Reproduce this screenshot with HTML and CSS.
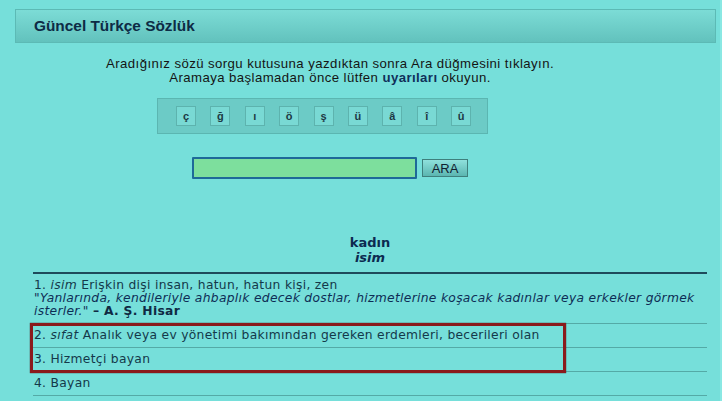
FILE: index.html
```html
<!DOCTYPE html>
<html lang="tr">
<head>
<meta charset="utf-8">
<title>Güncel Türkçe Sözlük</title>
<link rel="stylesheet" href="styles.css">
</head>
<body>
<div class="page">
  <div class="header"><h1 class="title">Güncel Türkçe Sözlük</h1></div>
  <div class="search">
    <p class="intro">Aradığınız sözü sorgu kutusuna yazdıktan sonra Ara düğmesini tıklayın.<br>Aramaya başlamadan önce lütfen <b class="warn">uyarıları</b> okuyun.</p>
    <div class="chars">
      <span class="ch">ç</span><span class="ch">ğ</span><span class="ch">ı</span><span class="ch">ö</span><span class="ch">ş</span><span class="ch">ü</span><span class="ch">â</span><span class="ch">î</span><span class="ch">û</span>
    </div>
    <div class="form">
      <input class="query" type="text" value="">
      <button class="go" type="button">ARA</button>
    </div>
  </div>
  <div class="results">
    <div class="head">
      <div class="word">kadın</div>
      <div class="kind">isim</div>
    </div>
    <div class="list">
      <div class="row r1">1. <i>isim</i> Erişkin dişi insan, hatun, hatun kişi, zen<br><i class="quote">"Yanlarında, kendileriyle ahbaplık edecek dostlar, hizmetlerine koşacak kadınlar veya erkekler görmek isterler."</i> <b>– A. Ş. Hisar</b></div>
      <div class="marked">
        <div class="row">2. <i>sıfat</i> Analık veya ev yönetimi bakımından gereken erdemleri, becerileri olan</div>
        <div class="row">3. Hizmetçi bayan</div>
      </div>
      <div class="row">4. Bayan</div>
    </div>
  </div>
</div>
</body>
</html>
```
FILE: styles.css
```css
html, body {
  margin: 0;
  padding: 0;
  background: #76dfda;
}
.page {
  width: 722px;
  height: 401px;
  overflow: hidden;
  border-right: 2px solid #8ae8e3;
  box-sizing: border-box;
}
.header {
  margin: 9px 4px 0 15px;
  height: 34px;
  box-sizing: border-box;
  border: 1px solid #5cbab5;
  background: linear-gradient(#7cdcd6, #62c2bd);
  display: flex;
  align-items: center;
  padding-left: 18px;
}
.title {
  margin: 0;
  font: bold 15.4px "Liberation Sans", Arial, sans-serif;
  color: #0d2b45;
}
.search {
  width: 660px;
  display: flex;
  flex-direction: column;
  align-items: center;
}
.intro {
  margin: 14px 0 0;
  text-align: center;
  font: 13.2px/14px "Liberation Sans", Arial, sans-serif;
  letter-spacing: 0.42px;
  color: #141414;
}
.warn {
  color: #10305a;
}
.chars {
  margin: 13px 15px 0 0;
  width: 331px;
  height: 36px;
  box-sizing: border-box;
  background: #6ccbc6;
  border: 1px solid #5bb6b1;
  display: flex;
  align-items: center;
  gap: 14.4px;
  padding-left: 18px;
}
.ch {
  width: 20px;
  height: 20px;
  box-sizing: border-box;
  background: #79d9d4;
  border: 1px solid #5db3ae;
  display: flex;
  align-items: center;
  justify-content: center;
  font: bold 11px "Liberation Sans", Arial, sans-serif;
  color: #1d3a44;
}
.form {
  margin-top: 23px;
  display: flex;
  align-items: center;
  gap: 5px;
}
.query {
  width: 225px;
  height: 22px;
  box-sizing: border-box;
  margin: 0;
  background: #7ddf9d;
  border: 2px solid #1e6a98;
  border-radius: 1px;
}
.go {
  width: 46px;
  height: 18px;
  margin: 0;
  padding: 0;
  box-sizing: border-box;
  border: 1px solid #3e7f7c;
  background: linear-gradient(#8fe0dc, #5bb6b1);
  font: 13px "Liberation Sans", Arial, sans-serif;
  color: #102030;
}
.results {
  margin: 56px 13px 0 33px;
}
.head {
  text-align: center;
  color: #0c2a50;
  font: bold 13px/15px "DejaVu Sans", Verdana, sans-serif;
  padding-bottom: 7px;
  border-bottom: 2px solid #1e4b5b;
}
.kind {
  font-style: italic;
}
.row {
  font: 12.3px/13px "DejaVu Sans", Verdana, sans-serif;
  letter-spacing: 0.3px;
  color: #14394a;
  padding: 5px 0 5px 1px;
  border-bottom: 1px solid #54aaa6;
}
.r1 {
  padding-top: 5px;
  padding-right: 12px;
}
.quote {
  color: #0e2d55;
}
.row b {
  color: #0f2a44;
}
.marked {
  position: relative;
}
.marked::after {
  content: "";
  position: absolute;
  left: -3px;
  top: -1px;
  bottom: -1px;
  width: 530px;
  border: 3px solid #8a1a1c;
  box-shadow: 0 0 1px #3a0808;
  pointer-events: none;
}
```
